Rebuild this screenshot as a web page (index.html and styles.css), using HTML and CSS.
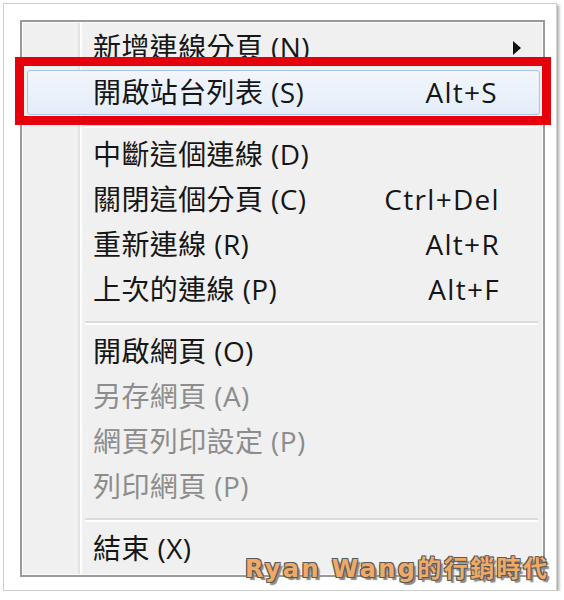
FILE: index.html
```html
<!DOCTYPE html>
<html lang="zh-Hant">
<head>
	<meta charset="UTF-8">
	<title>右鍵選單</title>
	<link rel="stylesheet" href="styles.css">
</head>
<body>
	<div class="frame">
		<div class="menu">
			<div class="item"><span>新增連線分頁 (N)</span><span class="key"></span><svg class="arrow" width="8" height="14" viewBox="0 0 8 14"><polygon points="0,0 8,7 0,14" fill="#111"/></svg></div>
			<div class="item hover"><span>開啟站台列表 (S)</span><span class="key">Alt+S</span></div>
			<div class="sep"></div>
			<div class="item"><span>中斷這個連線 (D)</span><span class="key"></span></div>
			<div class="item"><span>關閉這個分頁 (C)</span><span class="key">Ctrl+Del</span></div>
			<div class="item"><span>重新連線 (R)</span><span class="key">Alt+R</span></div>
			<div class="item"><span>上次的連線 (P)</span><span class="key">Alt+F</span></div>
			<div class="sep"></div>
			<div class="item"><span>開啟網頁 (O)</span><span class="key"></span></div>
			<div class="item off"><span>另存網頁 (A)</span><span class="key"></span></div>
			<div class="item off"><span>網頁列印設定 (P)</span><span class="key"></span></div>
			<div class="item off"><span>列印網頁 (P)</span><span class="key"></span></div>
			<div class="sep"></div>
			<div class="item"><span>結束 (X)</span><span class="key"></span></div>
		</div>
		<!-- annotation drawn over the menu -->
		<div class="mark"></div>
		<div class="watermark">Ryan Wang的行銷時代</div>
	</div>
</body>
</html>
```

FILE: styles.css
```css
body {
	margin: 0;
	background-color: #fff;
	font-family: "Open Sans", "Noto Sans CJK TC", sans-serif;
}
.frame {
	position: relative;
	box-sizing: border-box;
	width: 554px;
	height: 588px;
	margin: 3px 0 0 3px;
	padding: 16px 11px 13px 16px;
	border: 1px solid #cfcfcf;
	background-color: #fff;
	box-shadow: 2px 2px 3px rgba(0, 0, 0, 0.35);
}
.menu {
	box-sizing: border-box;
	width: 525px;
	height: 557px;
	padding: 3px 2px 4px 3px;
	border: 2px solid #9a9a9a;
	background-color: #f0f0f0;
	background-image: linear-gradient(to right, transparent 56px, #e2e3e3 56px, #e2e3e3 58px, #fff 58px, #fff 60px, transparent 60px);
	box-shadow: inset 0 0 0 1px #fbfbfb;
	overflow: hidden;
}
.item {
	display: grid;
	grid-template-columns: 1fr auto 41px;
	align-items: center;
	box-sizing: border-box;
	height: 45px;
	line-height: 45px;
	padding-left: 68px;
	font-size: 28px;
	letter-spacing: 0.4px;
	color: #161616;
	white-space: nowrap;
}
.item .key {
	letter-spacing: 1.3px;
}
.item.off {
	color: #8d8d8d;
}
.item.hover {
	margin: 0 1px 0 2px;
	padding-left: 65px;
	border: 1px solid #a9c4e4;
	border-radius: 3px;
	line-height: 43px;
	background: linear-gradient(#f2f6fc, #e3edf9);
}
.arrow {
	grid-column: 3;
	margin-left: 13px;
}
.sep {
	height: 4px;
	margin: 9px 3px 4px 60px;
	border-top: 2px solid #dcdcdc;
	border-bottom: 2px solid #fff;
	box-sizing: border-box;
}
.mark {
	position: absolute;
	left: 11px;
	top: 53px;
	width: 536px;
	height: 68px;
	box-sizing: border-box;
	border: 9px solid #e6000b;
}
.watermark {
	position: absolute;
	left: 241px;
	top: 552px;
	font-family: "DejaVu Sans", "Noto Sans CJK TC", sans-serif;
	font-weight: bold;
	font-size: 24px;
	line-height: 26px;
	letter-spacing: 2.4px;
	color: #eeaa66;
	white-space: nowrap;
	text-shadow: -1px -1px 0 #5a5a5a, 1px -1px 0 #5a5a5a, -1px 1px 0 #5a5a5a, 1px 1px 0 #5a5a5a, 3px 3px 1px #8a8a8a;
}
```
